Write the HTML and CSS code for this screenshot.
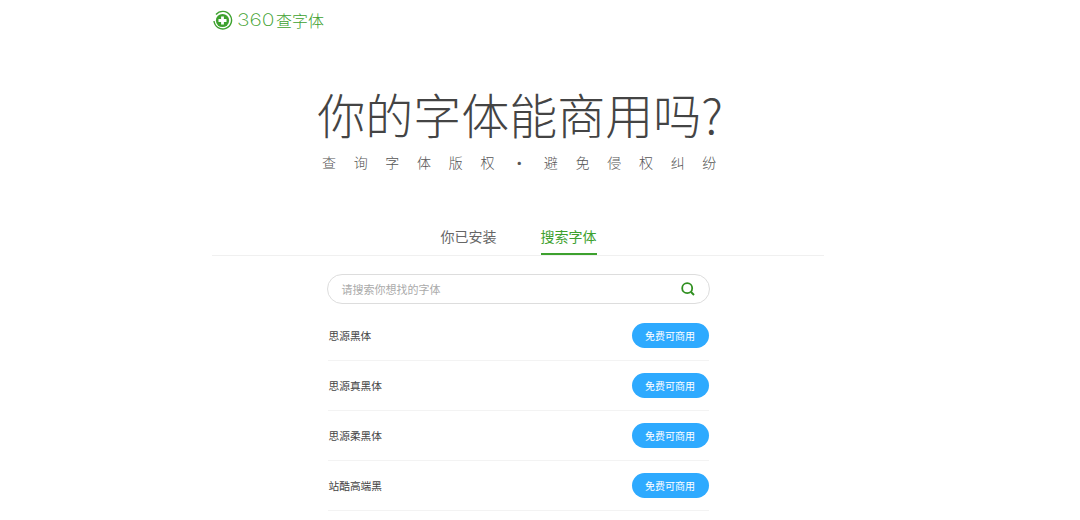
FILE: index.html
```html
<!DOCTYPE html>
<html lang="zh">
<head>
    <meta charset="UTF-8">
    <title>360查字体</title>
    <link rel="stylesheet" href="styles.css">
</head>
<body>
<div class="page">
    <div class="logo">
        <svg class="logo-icon" width="21" height="21" viewBox="0 0 21 21">
            <path d="M4 4.5A8.8 8.8 0 1 1 2 11" fill="none" stroke="#3da12e" stroke-width="1.4"/>
            <circle cx="10.5" cy="10.5" r="6.6" fill="#3da12e"/>
            <path d="M10.5 6.5v8M6.5 10.5h8" stroke="#fff" stroke-width="2.8"/>
        </svg>
        <span class="logo-num">360</span>
        <span class="logo-text">查字体</span>
    </div>

    <h1 class="title">你的字体能商用吗?</h1>
    <p class="subtitle">查询字体版权<span class="dot">·</span>避免侵权纠纷</p>

    <div class="tabs">
        <div class="tab">你已安装</div>
        <div class="tab active">搜索字体</div>
    </div>

    <div class="content">
        <div class="search">
            <span class="placeholder">请搜索你想找的字体</span>
            <svg width="16" height="16" viewBox="0 0 16 16">
                <circle cx="7.2" cy="7.2" r="5" fill="none" stroke="#2f8f1f" stroke-width="1.8"/>
                <path d="M11 11l3 3" stroke="#2f8f1f" stroke-width="2"/>
            </svg>
        </div>
        <div class="font-row"><span>思源黑体</span><button class="badge">免费可商用</button></div>
        <div class="font-row"><span>思源真黑体</span><button class="badge">免费可商用</button></div>
        <div class="font-row"><span>思源柔黑体</span><button class="badge">免费可商用</button></div>
        <div class="font-row"><span>站酷高端黑</span><button class="badge">免费可商用</button></div>
    </div>
</div>
</body>
</html>
```

FILE: styles.css
```css
body {
    margin: 0;
    background: #fff;
    font-family: "Noto Sans CJK SC", "Liberation Sans", sans-serif;
    overflow: hidden;
}

.page {
    width: 612px;
    height: 520px;
    margin-left: 212px;
    display: flex;
    flex-direction: column;
    align-items: center;
}

.logo {
    align-self: flex-start;
    height: 21px;
    margin-top: 10px;
    display: flex;
    align-items: center;
    color: #3da12e;
}

.logo-icon {
    flex: none;
}

.logo-num {
    width: 40px;
    margin-left: 4px;
    font-family: "Inter", sans-serif;
    font-size: 17px;
    font-weight: 200;
    line-height: 21px;
    transform: scaleX(1.24);
    transform-origin: left center;
}

.logo-text {
    font-size: 16px;
    font-weight: 300;
    line-height: 21px;
    margin-left: -1px;
}

.title {
    margin: 47px 0 0 4px;
    font-size: 48px;
    font-weight: 300;
    line-height: 70px;
    color: #444;
    white-space: nowrap;
}

.subtitle {
    margin: 4px -20px 0 0;
    font-size: 14px;
    font-weight: 300;
    line-height: 20px;
    letter-spacing: 17.7px;
    color: #555;
    white-space: nowrap;
}

.dot {
    display: inline-block;
    width: 14px;
    margin-right: 17.7px;
    text-align: center;
    letter-spacing: 0;
    font-weight: 500;
}

.tabs {
    width: 100%;
    height: 48px;
    margin-top: 36px;
    padding-left: 1px;
    box-sizing: border-box;
    border-bottom: 1px solid #f0f0f0;
    display: flex;
    justify-content: center;
    gap: 44px;
}

.tab {
    width: 56px;
    height: 34px;
    padding-top: 11px;
    font-size: 14px;
    line-height: 34px;
    color: #666;
    white-space: nowrap;
}

.tab.active {
    color: #3da12e;
    border-bottom: 2px solid #3da12e;
}

.content {
    width: 383px;
    margin-top: 18px;
}

.search {
    height: 28px;
    border: 1px solid #ddd;
    border-radius: 15px;
    padding: 0 13px 0 14px;
    display: flex;
    align-items: center;
    justify-content: space-between;
}

.placeholder {
    font-size: 11px;
    color: #aaa;
}

.font-row {
    height: 49px;
    margin: 0 1px;
    padding-left: 1px;
    border-bottom: 1px solid #f3f3f3;
    display: flex;
    align-items: center;
    justify-content: space-between;
    font-size: 10.7px;
    color: #444;
}

.search + .font-row {
    margin-top: 7px;
}

.badge {
    width: 77px;
    height: 25px;
    padding: 0;
    border: none;
    border-radius: 13px;
    background: #2eaaff;
    color: #fff;
    font-family: inherit;
    font-size: 10px;
}
```
